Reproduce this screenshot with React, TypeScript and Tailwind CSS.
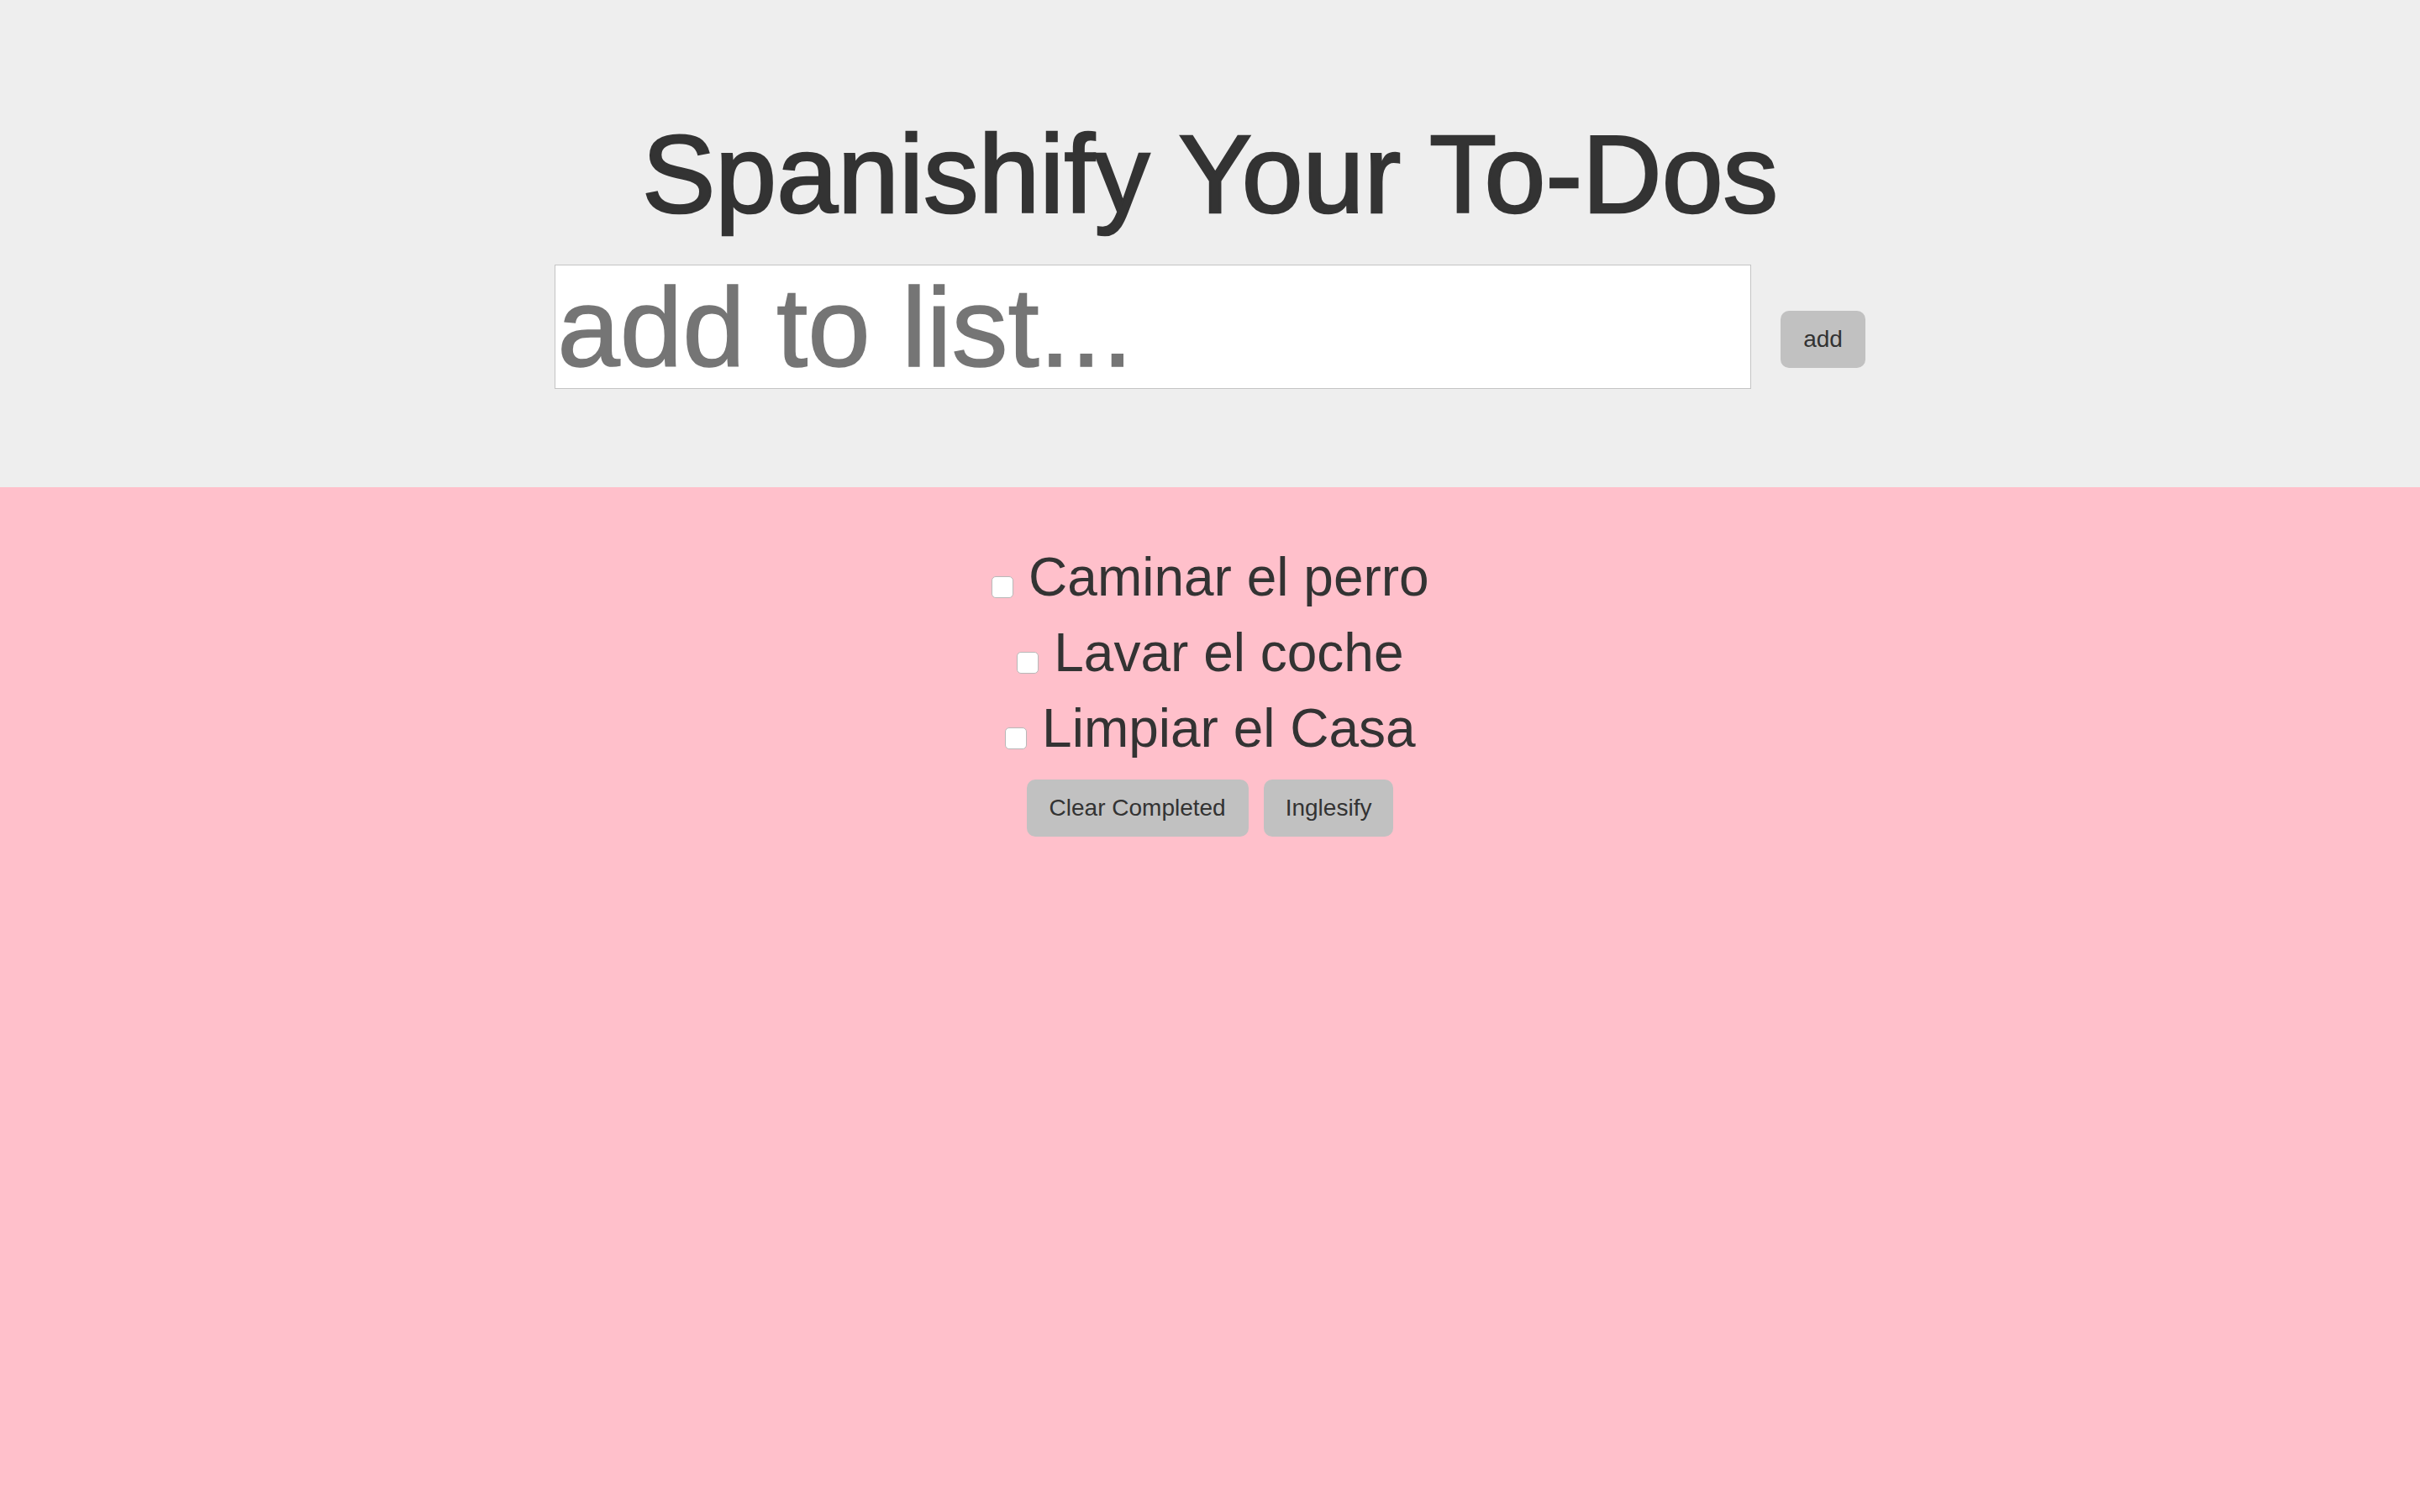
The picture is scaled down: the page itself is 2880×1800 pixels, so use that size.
const todos = ["Caminar el perro", "Lavar el coche", "Limpiar el Casa"];

export default function App() {
  return (
    <div className="min-h-screen bg-[#ffc0cb] font-['Liberation_Sans',Arial,sans-serif] text-[#333]">
      <header className="h-[580px] bg-[#eeeeee] flex flex-col items-center pt-[142px]">
        <h1 className="text-[131px] leading-none font-normal [-webkit-text-stroke:2.5px_#333]">
          Spanishify Your To-Dos
        </h1>
        <div className="flex items-start mt-[42px]">
          <input
            type="text"
            placeholder="add to list..."
            className="w-[1424px] h-[148px] bg-white border border-[#c4c4c4] px-[2px] text-[134px] text-[#333] placeholder:text-[#757575] placeholder:[-webkit-text-stroke:1.5px_#757575] outline-none"
          />
          <button className="ml-[35px] mt-[55px] h-[68px] px-[27px] rounded-[10px] bg-[#c1c1c1] text-[28px] text-[#333]">
            add
          </button>
        </div>
      </header>

      <main className="pt-[62px] flex flex-col items-center">
        <ul className="text-center">
          {todos.map((todo) => (
            <li key={todo} className="text-[64px] leading-[90px]">
              <input
                type="checkbox"
                className="appearance-none m-0 ml-px w-[26px] h-[26px] rounded-[5px] border border-[#b8b8b8] bg-white align-[-3px] checked:bg-[#3b82f6]"
              />{" "}
              {todo}
            </li>
          ))}
        </ul>
        <div className="flex gap-[18px] mt-[16px]">
          <button className="h-[68px] px-[27px] rounded-[10px] bg-[#c1c1c1] text-[28px] text-[#333]">
            Clear Completed
          </button>
          <button className="h-[68px] px-[26px] rounded-[10px] bg-[#c1c1c1] text-[28px] text-[#333]">
            Inglesify
          </button>
        </div>
      </main>
    </div>
  );
}
